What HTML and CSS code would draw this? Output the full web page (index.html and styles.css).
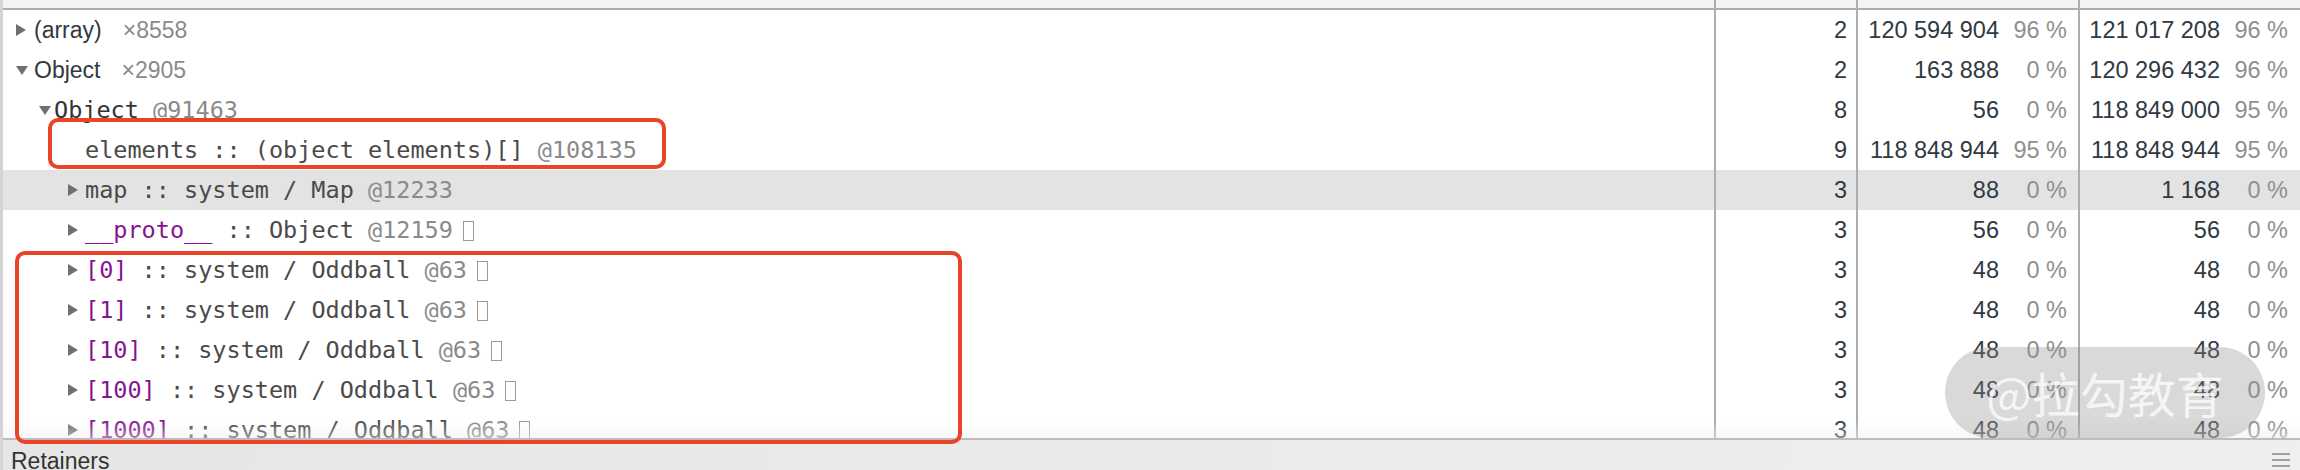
FILE: index.html
```html
<!DOCTYPE html>
<html>
<head>
<meta charset="utf-8">
<link rel="stylesheet" href="styles.css">
</head>
<body>
<div class="panel">
  <div class="header">
    <div class="hc"></div><div class="hc"></div><div class="hc"></div><div class="hc"></div>
  </div>
  <div class="rows">
    <div class="row">
      <div class="cell name l0"><span class="tri right"></span><span class="sans">(array)</span><span class="count">×8558</span></div>
      <div class="cell dist">2</div>
      <div class="cell size"><span class="num">120 594 904</span><span class="pct">96 %</span></div>
      <div class="cell size last"><span class="num">121 017 208</span><span class="pct">96 %</span></div>
    </div>
    <div class="row">
      <div class="cell name l0"><span class="tri down"></span><span class="sans">Object</span><span class="count">×2905</span></div>
      <div class="cell dist">2</div>
      <div class="cell size"><span class="num">163 888</span><span class="pct">0 %</span></div>
      <div class="cell size last"><span class="num">120 296 432</span><span class="pct">96 %</span></div>
    </div>
    <div class="row">
      <div class="cell name l1"><span class="tri down"></span><span class="mono"><span class="dark">Object</span> <span class="id">@91463</span></span></div>
      <div class="cell dist">8</div>
      <div class="cell size"><span class="num">56</span><span class="pct">0 %</span></div>
      <div class="cell size last"><span class="num">118 849 000</span><span class="pct">95 %</span></div>
    </div>
    <div class="row">
      <div class="cell name l2"><span class="tri none"></span><span class="mono">elements :: (object elements)[] <span class="id">@108135</span></span></div>
      <div class="cell dist">9</div>
      <div class="cell size"><span class="num">118 848 944</span><span class="pct">95 %</span></div>
      <div class="cell size last"><span class="num">118 848 944</span><span class="pct">95 %</span></div>
    </div>
    <div class="row sel">
      <div class="cell name l2"><span class="tri right"></span><span class="mono">map :: system / Map <span class="id">@12233</span></span></div>
      <div class="cell dist">3</div>
      <div class="cell size"><span class="num">88</span><span class="pct">0 %</span></div>
      <div class="cell size last"><span class="num">1 168</span><span class="pct">0 %</span></div>
    </div>
    <div class="row">
      <div class="cell name l2"><span class="tri right"></span><span class="mono"><span class="prop">__proto__</span> :: Object <span class="id">@12159</span><span class="tofu"></span></span></div>
      <div class="cell dist">3</div>
      <div class="cell size"><span class="num">56</span><span class="pct">0 %</span></div>
      <div class="cell size last"><span class="num">56</span><span class="pct">0 %</span></div>
    </div>
    <div class="row">
      <div class="cell name l2"><span class="tri right"></span><span class="mono"><span class="prop">[0]</span> :: system / Oddball <span class="id">@63</span><span class="tofu"></span></span></div>
      <div class="cell dist">3</div>
      <div class="cell size"><span class="num">48</span><span class="pct">0 %</span></div>
      <div class="cell size last"><span class="num">48</span><span class="pct">0 %</span></div>
    </div>
    <div class="row">
      <div class="cell name l2"><span class="tri right"></span><span class="mono"><span class="prop">[1]</span> :: system / Oddball <span class="id">@63</span><span class="tofu"></span></span></div>
      <div class="cell dist">3</div>
      <div class="cell size"><span class="num">48</span><span class="pct">0 %</span></div>
      <div class="cell size last"><span class="num">48</span><span class="pct">0 %</span></div>
    </div>
    <div class="row">
      <div class="cell name l2"><span class="tri right"></span><span class="mono"><span class="prop">[10]</span> :: system / Oddball <span class="id">@63</span><span class="tofu"></span></span></div>
      <div class="cell dist">3</div>
      <div class="cell size"><span class="num">48</span><span class="pct">0 %</span></div>
      <div class="cell size last"><span class="num">48</span><span class="pct">0 %</span></div>
    </div>
    <div class="row">
      <div class="cell name l2"><span class="tri right"></span><span class="mono"><span class="prop">[100]</span> :: system / Oddball <span class="id">@63</span><span class="tofu"></span></span></div>
      <div class="cell dist">3</div>
      <div class="cell size"><span class="num">48</span><span class="pct">0 %</span></div>
      <div class="cell size last"><span class="num">48</span><span class="pct">0 %</span></div>
    </div>
    <div class="row">
      <div class="cell name l2"><span class="tri right"></span><span class="mono"><span class="prop">[1000]</span> :: system / Oddball <span class="id">@63</span><span class="tofu"></span></span></div>
      <div class="cell dist">3</div>
      <div class="cell size"><span class="num">48</span><span class="pct">0 %</span></div>
      <div class="cell size last"><span class="num">48</span><span class="pct">0 %</span></div>
    </div>
    <div class="fade"></div>
  </div>
  <div class="footer">
    <span class="ftitle">Retainers</span>
    <svg class="menu" width="18" height="14" viewBox="0 0 18 14"><rect x="0" y="0" width="18" height="2" fill="#a0a0a0"/><rect x="0" y="6" width="18" height="2" fill="#a0a0a0"/><rect x="0" y="12" width="18" height="2" fill="#a0a0a0"/></svg>
  </div>
  <div class="mark box1"></div>
  <div class="mark box2"></div>
  <div class="watermark">@拉勾教育</div>
</div>
</body>
</html>
```

FILE: styles.css
```css
* { box-sizing: border-box; }
html, body { margin: 0; padding: 0; }
body {
  width: 2300px;
  height: 470px;
  overflow: hidden;
  background: #fff;
  font-family: "Liberation Sans", Arial, sans-serif;
  color: #303942;
}
.panel {
  position: relative;
  width: 2300px;
  height: 470px;
  border-left: 3px solid #d4d4d4;
  display: flex;
  flex-direction: column;
}
.header {
  height: 10px;
  flex: none;
  background: #f3f3f3;
  border-bottom: 2px solid #adadad;
  display: grid;
  grid-template-columns: 1711px 142px 222px 1fr;
}
.header .hc + .hc { border-left: 2px solid #adadad; }
.rows {
  position: relative;
  height: 428px;
  flex: none;
  overflow: hidden;
}
.row {
  display: grid;
  grid-template-columns: 1711px 142px 222px 1fr;
  height: 40px;
}
.row.sel { background: #e3e3e3; }
.cell {
  display: flex;
  align-items: center;
  height: 40px;
  white-space: nowrap;
  font-size: 23.5px;
}
.cell + .cell {
  border-left: 2px solid #adadad;
  justify-content: flex-end;
  padding-right: 11px;
}
.cell.dist { padding-right: 9px; }
.cell.last { padding-right: 12px; }
.pct {
  display: inline-block;
  width: 68px;
  text-align: right;
  color: #909090;
}
.name.l0 { padding-left: 13px; }
.name.l1 { padding-left: 36px; }
.name.l2 { padding-left: 65px; }
.tri {
  flex: none;
  width: 0;
  height: 0;
}
.tri.right {
  border-left: 10px solid #6f6f6f;
  border-top: 6px solid transparent;
  border-bottom: 6px solid transparent;
  margin-right: 7px;
}
.tri.down {
  border-top: 9px solid #6f6f6f;
  border-left: 6px solid transparent;
  border-right: 6px solid transparent;
  margin-right: 5px;
}
.tri.none { width: 17px; }
.l0 .tri.right { margin-right: 8px; }
.l0 .tri.down { margin-right: 6px; }
.l1 .tri.down { margin-right: 3px; }
.sans { font-size: 23px; color: #303942; }
.count { font-size: 23px; margin-left: 21px; color: #8a8a8a; }
.mono {
  font-family: "DejaVu Sans Mono", "Liberation Mono", monospace;
  font-size: 23.5px;
  color: #4a4a4a;
}
.mono .dark { color: #333; }
.mono .id { color: #8a8a8a; }
.mono .prop { color: #881391; }
.tofu {
  display: inline-block;
  width: 11px;
  height: 20px;
  margin-left: 10px;
  border: 1.5px solid #9a9a9a;
  vertical-align: -3px;
}
.fade {
  position: absolute;
  left: 0;
  right: 0;
  bottom: 0;
  height: 18px;
  background: linear-gradient(rgba(238,238,238,0), rgba(238,238,238,0.45));
  pointer-events: none;
}
.footer {
  flex: none;
  height: 32px;
  border-top: 2px solid #bcbcbc;
  background: linear-gradient(90deg, #e6e6e6, #efefef);
  display: flex;
  align-items: flex-start;
  padding: 10px 10px 0 8px;
  overflow: hidden;
}
.ftitle {
  font-size: 23px;
  line-height: 23px;
  color: #333;
}
.menu { margin-left: auto; margin-top: 3px; }
.mark {
  position: absolute;
  border: 4px solid #eb4326;
  border-radius: 10px;
  pointer-events: none;
}
.box1 { left: 45px; top: 118px; width: 618px; height: 51px; }
.box2 { left: 12px; top: 251px; width: 947px; height: 193px; }
.watermark {
  position: absolute;
  left: 1942px;
  top: 347px;
  width: 320px;
  height: 91px;
  border-radius: 46px;
  background: rgba(140, 140, 140, 0.33);
  color: rgba(255, 255, 255, 0.75);
  font-family: "Noto Sans CJK SC", "Liberation Sans", sans-serif;
  font-size: 48px;
  line-height: 91px;
  text-align: center;
}
```
